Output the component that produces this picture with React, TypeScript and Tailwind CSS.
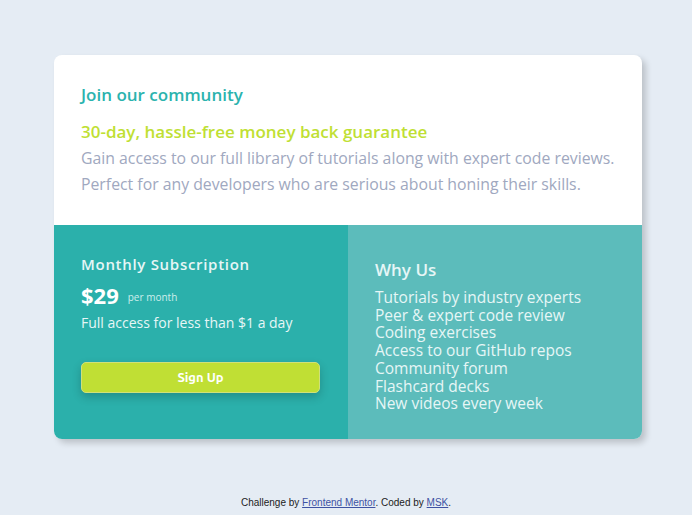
import React from 'react';

const features = [
  'Tutorials by industry experts',
  'Peer & expert code review',
  'Coding exercises',
  'Access to our GitHub repos',
  'Community forum',
  'Flashcard decks',
  'New videos every week',
];

const App: React.FC = () => {
  return (
    <div className="min-h-[515px] bg-[#e5ecf4] flex flex-col items-center font-['Open_Sans','Noto_Sans',sans-serif]">
      <main className="mt-[55px] ml-[4px] w-[588px] rounded-lg overflow-hidden bg-white shadow-[4px_4px_6px_rgba(0,0,0,0.18)]">
        {/* Top */}
        <section className="px-[27px] pt-[29px] pb-[28px]">
          <h1 className="text-[17px] font-semibold text-[#2bb3ae] leading-[22px]">Join our community</h1>
          <h2 className="mt-[15px] text-[17px] font-semibold text-[#c0df34] leading-[22px]">
            30-day, hassle-free money back guarantee
          </h2>
          <p className="mt-[2px] text-[15.8px] leading-[26px] text-[#a0a8c0]">
            Gain access to our full library of tutorials along with expert code reviews. Perfect for any developers
            who are serious about honing their skills.
          </p>
        </section>

        {/* Bottom */}
        <section className="grid grid-cols-2 h-[214px]">
          <div className="bg-[#2bb0ab] px-[27px] pt-[29px] text-white">
            <h3 className="text-[15px] font-semibold tracking-[0.7px] text-[#e6f6f6] leading-[20px]">Monthly Subscription</h3>
            <div className="mt-[8px] flex items-center gap-[9px]">
              <span className="text-[22px] font-bold leading-[26px]">$29</span>
              <span className="text-[10px] text-[#cdeeec] mt-[4px]">per month</span>
            </div>
            <p className="mt-[6px] text-[14px] text-[#e6f6f6] leading-[18px]">Full access for less than $1 a day</p>
            <button className="mt-[30px] w-[239px] h-[31px] rounded-[5px] bg-[#c0df34] text-white text-[13px] font-bold shadow-[0_4px_10px_rgba(0,0,0,0.2)] border border-[#d0e07a] font-['Ubuntu','Noto_Sans',sans-serif]">
              Sign Up
            </button>
          </div>
          <div className="bg-[#5cbcbb] px-[27px] pt-[34px] text-[#e6f6f6]">
            <h3 className="text-[17px] font-semibold leading-[22px]">Why Us</h3>
            <ul className="mt-[8px] text-[15.5px] leading-[17.7px]">
              {features.map(f => (
                <li key={f}>{f}</li>
              ))}
            </ul>
          </div>
        </section>
      </main>

      <footer className="mt-[56px] text-[10px] text-[#222] font-['Liberation_Sans',sans-serif]">
        Challenge by{' '}
        <a href="#" className="text-[#3e52a3] underline">
          Frontend Mentor
        </a>
        . Coded by{' '}
        <a href="#" className="text-[#3e52a3] underline">
          MSK
        </a>
        .
      </footer>
    </div>
  );
};

export default App;
